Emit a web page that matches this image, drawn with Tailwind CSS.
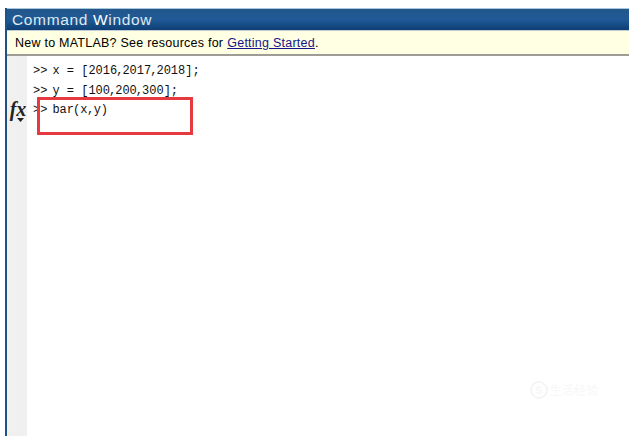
<!DOCTYPE html>
<html>
    <head>
        <title>Command Window</title>
        <script src="https://cdn.jsdelivr.net/npm/@tailwindcss/browser@4"></script>
    </head>
    <body class="w-[629px] h-[436px] overflow-hidden bg-white pt-[8px] pl-[5px] font-['Liberation_Sans',sans-serif]">
        <div class="relative flex flex-col h-[428px] border-l-2 border-[#1d5286]">
            <div class="h-[22px] shrink-0 pl-[5px] flex items-center border-t border-[#a9c8de] bg-gradient-to-b from-[#23568b] via-[#1f5a96] to-[#0e3f75] text-[15.5px] tracking-[0.65px] text-[#dfe9f2]">
                <span>Command <b class="font-normal text-white">W</b>indow</span>
            </div>
            <div class="h-[26px] shrink-0 pl-[8px] pt-[1px] flex items-center gap-[4px] bg-[#ffffe3] border-t border-[#c5ccd0] border-b-2 border-b-[#9d9d96] text-[12.5px] tracking-[0.24px] text-black">
                New to MATLAB? See resources for
                <a href="#" class="text-[#14148c] underline">Getting Started</a><span class="-ml-[4px]">.</span>
            </div>
            <div class="flex flex-1">
                <div class="w-[20px] shrink-0 bg-[#f0f0f0] border-l-2 border-[#f7efec] flex flex-col items-center pt-[44px]">
                    <span class="font-['Liberation_Serif',serif] italic font-bold text-[20px] leading-[18px] text-[#222]">fx</span>
                    <svg width="7" height="4" viewBox="0 0 7 4" class="ml-[4px]"><path d="M0 0h7L3.500 4z" fill="#222" /></svg>
                </div>
                <div class="pl-[6px] pt-[6px] font-['Liberation_Mono',monospace] text-[12px] leading-[19.5px] text-[#111]">
                    <div class="whitespace-pre">&gt;&gt;<span class="ml-[5px]">x = [2016<span class="-mx-[1px]">,</span>2017<span class="-mx-[1px]">,</span>2018];</span></div>
                    <div class="whitespace-pre">&gt;&gt;<span class="ml-[5px]">y = [100<span class="-mx-[1px]">,</span>200<span class="-mx-[1px]">,</span>300];</span></div>
                    <div class="whitespace-pre">&gt;&gt;<span class="ml-[5px]">bar<span class="-ml-[1px]">(</span>x<span class="-mx-[0.5px]">,</span>y)</span></div>
                </div>
            </div>
            <div class="absolute left-[30px] top-[89px] w-[156px] h-[38px] border-[3px] border-[#e63a40]"></div>
            <div class="absolute left-[523px] top-[373px] flex items-center gap-[2px] text-[#f7f7f7]">
                <span class="w-[18px] h-[18px] rounded-full border-2 border-[#f5f5f5] flex items-center justify-center text-[11px] font-bold">S</span>
                <span class="font-['Noto_Sans_CJK_SC',sans-serif] text-[12px]">生活经验</span>
            </div>
        </div>
    </body>
</html>
